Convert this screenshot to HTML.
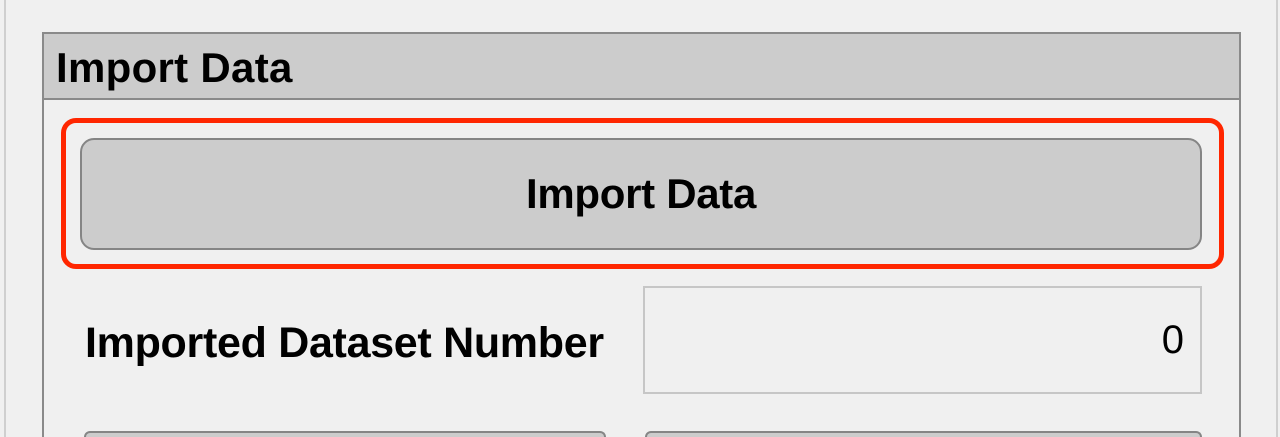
<!DOCTYPE html>
<html style="overflow:hidden;height:437px"><head><style>
body{margin:0;width:1280px;height:437px;background:#f0f0f0;position:relative;overflow:hidden;font-family:"Liberation Sans",Arial,sans-serif}
div{position:absolute;box-sizing:border-box;white-space:nowrap}
</style></head><body>
<div style="left:4px;top:0;width:2px;height:437px;background:#cfcfcf"></div>
<div style="left:1276px;top:0;width:2px;height:437px;background:#cfcfcf"></div>
<div style="left:42px;top:32px;width:1199px;height:405px;border:2px solid #8a8a8a;border-bottom:none"></div>
<div style="left:44px;top:34px;width:1195px;height:66px;background:#cccccc;border-bottom:2px solid #8a8a8a"></div>
<div style="left:56px;top:42px;font-size:42px;font-weight:bold;color:#000;line-height:52px;letter-spacing:0.3px">Import Data</div>
<div style="left:61px;top:118px;width:1163px;height:151px;border:5px solid #ff2600;border-radius:15px"></div>
<div style="left:80px;top:138px;width:1122px;height:112px;border:2px solid #858585;border-radius:14px;background:#cccccc;text-align:center;font-size:42px;font-weight:bold;line-height:108px;letter-spacing:-0.3px">Import Data</div>
<div style="left:85px;top:317px;font-size:43px;font-weight:bold;line-height:52px;letter-spacing:-0.3px">Imported Dataset Number</div>
<div style="left:643px;top:286px;width:559px;height:108px;border:2px solid #c6c6c6;background:#f0f0f0;text-align:right;padding-right:16px;font-size:40px;line-height:104px">0</div>
<div style="left:84px;top:431px;width:522px;height:6px;border:2px solid #858585;border-bottom:none;border-radius:14px 14px 0 0;background:#cccccc"></div>
<div style="left:645px;top:431px;width:557px;height:6px;border:2px solid #858585;border-bottom:none;border-radius:14px 14px 0 0;background:#cccccc"></div>
</body></html>
